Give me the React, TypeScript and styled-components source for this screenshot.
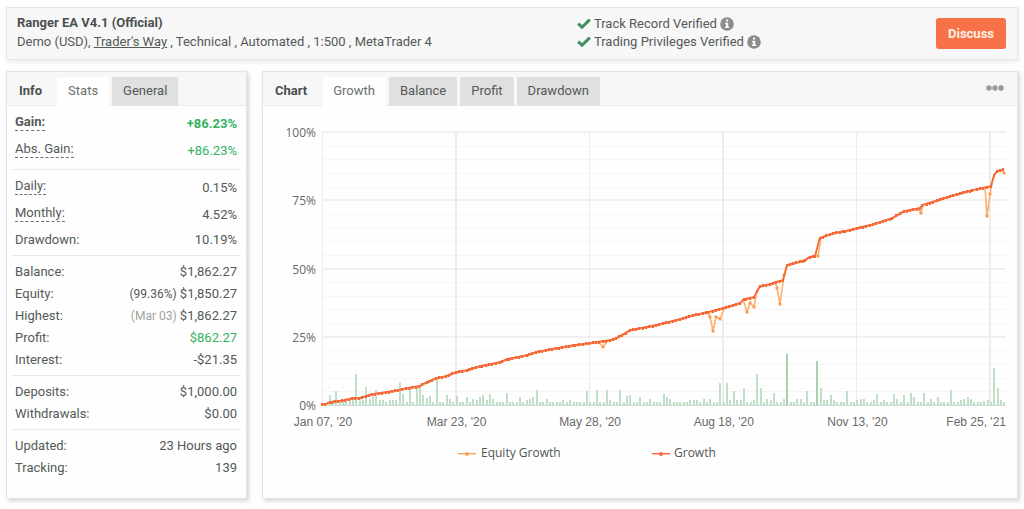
import React from 'react';
import styled, { createGlobalStyle } from 'styled-components';

const GlobalStyle = createGlobalStyle`
  * { box-sizing: border-box; }
  body {
    margin: 0;
    background: #fefefe;
    color: #545a57;
    font-family: Roboto, 'Liberation Sans', sans-serif;
    font-size: 13px;
    line-height: 18px;
  }
`;

const Page = styled.div`
  display: flex;
  flex-direction: column;
  gap: 11px;
  padding: 7px 6px 10px;
`;

const SystemHeader = styled.header`
  display: flex;
  align-items: flex-start;
  gap: 16px;
  height: 53px;
  padding: 5px 11px 5px 10px;
  background: #f7f7f7;
  border: 1px solid #e6e6e6;
  box-shadow: 1px 2px 4px rgba(0, 0, 0, 0.08);
`;

const Summary = styled.div`
  flex: 0 0 55%;
`;

const SystemName = styled.h1`
  margin: 0;
  color: #4a504d;
  font-size: 13px;
  line-height: 19px;
  font-weight: 700;
`;

const Description = styled.p`
  margin: 0;
  line-height: 20px;
`;

const BrokerLink = styled.a`
  color: inherit;
  text-decoration: underline;
`;

const Verifications = styled.ul`
  flex: 1;
  margin: 2px 0 0;
  padding: 0;
  list-style: none;
`;

const Verification = styled.li`
  display: flex;
  align-items: center;
  gap: 3px;
  height: 18px;
`;

const DiscussButton = styled.button`
  height: 31px;
  margin-top: 5px;
  padding: 0 12px;
  border: 0;
  border-radius: 3px;
  background: #f77248;
  color: #fff1e6;
  font: 700 13px Roboto, sans-serif;
  cursor: pointer;
`;

const Columns = styled.main`
  display: flex;
  align-items: stretch;
  gap: 15px;
`;

const Panel = styled.section<{ $width?: string }>`
  display: flex;
  flex-direction: column;
  flex: ${p => (p.$width ? `0 0 ${p.$width}` : '1 1 0')};
  min-width: 0;
  background: #fefefe;
  border: 1px solid #e4e4e4;
  box-shadow: 2px 2px 4px rgba(0, 0, 0, 0.16);
`;

const PanelHeader = styled.div`
  display: flex;
  align-items: flex-end;
  height: 34px;
  padding: 0 13px 0 0;
  background: #f7f7f7;
  box-shadow: inset 0 -1px #ececec;
`;

const PanelTitle = styled.h2`
  margin: 0;
  padding: 0 15px 2px 12px;
  color: #4a504d;
  font-size: 13px;
  line-height: 27px;
  font-weight: 700;
`;

const TabList = styled.div`
  display: flex;
  gap: 3px;
  flex: 1;
`;

const Tab = styled.button<{ $active?: boolean }>`
  height: 29px;
  padding: 0 11px 2px;
  border: 0;
  background: ${p => (p.$active ? '#fefefe' : '#e0e0e0')};
  color: ${p => (p.$active ? '#6b706d' : '#545a57')};
  font: 13px Roboto, sans-serif;
  cursor: pointer;
`;

const MenuButton = styled.button`
  display: flex;
  align-self: center;
  padding: 0 0 3px;
  border: 0;
  background: none;
  color: #9a9a9a;
  cursor: pointer;
`;

const StatsBody = styled.div`
  padding: 0 5px;
`;

const StatGroup = styled.dl`
  margin: 0;
  padding: 5px 4px 4px 3px;
  border-bottom: 1px solid #e9e9e9;
  &:last-child { border-bottom: 0; }
`;

const StatRow = styled.div<{ $help?: boolean; $bold?: boolean }>`
  display: flex;
  justify-content: space-between;
  align-items: flex-start;
  height: ${p => (p.$help ? 27 : 22)}px;
  line-height: ${p => (p.$help ? 26 : 22)}px;
  font-weight: ${p => (p.$bold ? 700 : 400)};
`;

const StatLabel = styled.dt<{ $help?: boolean }>`
  ${p => p.$help && `
    margin-top: 3px;
    line-height: 16px;
    border-bottom: 1px dashed #6d726f;
  `}
`;

const StatValue = styled.dd<{ $positive?: boolean }>`
  margin: 0;
  color: ${p => (p.$positive ? '#35b25e' : 'inherit')};
`;

const Note = styled.span<{ $muted?: boolean }>`
  font-size: 12px;
  color: ${p => (p.$muted ? '#a0a3a1' : 'inherit')};
`;

const ChartSvg = styled.svg`
  display: block;
  width: 100%;
  height: auto;
`;

const AxisText = styled.text`
  fill: #666b69;
  font: 12px 'Liberation Sans', Arial, sans-serif;
`;

const PercentText = styled.text`
  fill: #666b69;
  font: 12px 'Open Sans', sans-serif;
`;

const LegendText = styled.text`
  fill: #505653;
  font: 12px 'Open Sans', sans-serif;
`;

type Stat = {
  label: string;
  value: string;
  help?: boolean;
  bold?: boolean;
  positive?: boolean;
  note?: string;
  mutedNote?: boolean;
};

const statGroups: Stat[][] = [
  [
    { label: 'Gain:', value: '+86.23%', help: true, bold: true, positive: true },
    { label: 'Abs. Gain:', value: '+86.23%', help: true, positive: true },
  ],
  [
    { label: 'Daily:', value: '0.15%', help: true },
    { label: 'Monthly:', value: '4.52%', help: true },
    { label: 'Drawdown:', value: '10.19%' },
  ],
  [
    { label: 'Balance:', value: '$1,862.27' },
    { label: 'Equity:', value: '$1,850.27', note: '(99.36%)' },
    { label: 'Highest:', value: '$1,862.27', note: '(Mar 03)', mutedNote: true },
    { label: 'Profit:', value: '$862.27', positive: true },
    { label: 'Interest:', value: '-$21.35' },
  ],
  [
    { label: 'Deposits:', value: '$1,000.00' },
    { label: 'Withdrawals:', value: '$0.00' },
  ],
  [
    { label: 'Updated:', value: '23 Hours ago' },
    { label: 'Tracking:', value: '139' },
  ],
];

/* Chart units: the plot area is 684 x 273 with its origin at the top left. */
const PLOT_W = 684;
const PLOT_H = 273;
const STEP = 133.6 / 40;

const volumes = [
  2, 2, 10, 5, 14, 3, 5, 7, 6, 7, 31, 4, 5, 18, 6, 9, 15, 5, 5, 3,
  5, 5, 5, 23, 11, 3, 16, 3, 18, 19, 10, 7, 9, 3, 26, 3, 3, 10, 6, 3,
  9, 3, 3, 8, 3, 6, 5, 8, 10, 5, 11, 6, 3, 3, 3, 12, 3, 3, 3, 8,
  3, 5, 6, 8, 15, 3, 3, 6, 3, 3, 3, 3, 5, 3, 5, 3, 3, 3, 3, 14,
  3, 3, 15, 3, 3, 15, 5, 3, 3, 15, 3, 9, 10, 3, 3, 8, 3, 3, 6, 3,
  3, 3, 11, 8, 6, 3, 3, 3, 3, 3, 5, 5, 5, 3, 6, 3, 6, 3, 3, 22,
  3, 22, 5, 14, 5, 5, 17, 3, 3, 5, 31, 17, 3, 6, 5, 12, 3, 3, 6, 51,
  3, 3, 6, 6, 3, 14, 3, 3, 44, 17, 5, 5, 10, 5, 3, 3, 3, 14, 3, 3,
  5, 6, 6, 3, 3, 5, 11, 3, 5, 3, 3, 11, 6, 3, 10, 3, 12, 8, 3, 3,
  12, 3, 6, 3, 8, 3, 3, 3, 15, 3, 3, 5, 6, 8, 6, 3, 3, 3, 4, 5,
  3, 37, 17, 5, 3,
];

const growthAnchors: number[][] = [
  [0, 272], [3, 272], [8, 270], [16, 269], [23, 268], [30, 266], [37, 266], [44, 264],
  [50, 262], [64, 260], [76, 258], [85, 256], [97, 254], [105, 250], [114, 246], [124, 244],
  [134, 240], [145, 238], [158, 234], [178, 230], [185, 227], [205, 223], [214, 220],
  [234, 216], [253, 213], [274, 210], [288, 208], [294, 206], [300, 203], [308, 198],
  [334, 193], [358, 187], [371, 183], [386, 180], [401, 176], [418, 171], [422, 167],
  [432, 165], [435, 159], [438, 154], [448, 152], [456, 149], [461, 148], [465, 133],
  [483, 128], [486, 125], [493, 124], [495, 107], [511, 101], [523, 99], [535, 96],
  [548, 93], [570, 86], [582, 79], [598, 76], [600, 73], [613, 69], [628, 64], [650, 58],
  [669, 54], [672, 43], [675, 39], [683, 37],
];

const equityDips: number[][][] = [
  [[277, 210], [281, 215], [285, 209]],
  [[386, 180], [388, 185], [391, 199], [394, 185], [398, 187], [402, 177]],
  [[421, 167], [425, 180], [428, 171], [432, 175], [435, 159]],
  [[453, 149], [455, 156], [458, 172], [462, 143], [465, 133]],
  [[492, 124], [496, 124], [499, 106]],
  [[596, 76], [599, 81], [601, 74]],
  [[663, 55], [665, 84], [668, 62], [671, 46]],
  [[681, 38], [682, 41]],
];

const growthAt = (x: number) => {
  const next = growthAnchors.findIndex(a => a[0] >= x);
  if (next <= 0) return growthAnchors[next === 0 ? 0 : growthAnchors.length - 1][1];
  const [x0, y0] = growthAnchors[next - 1];
  const [x1, y1] = growthAnchors[next];
  return y0 + ((x - x0) / (x1 - x0)) * (y1 - y0);
};

/* Markers close to an anchor move onto it, which keeps the jumps steep. */
const growth = volumes.map((_, i) => {
  const x = i * STEP;
  const anchor = growthAnchors.find(a => Math.abs(a[0] - x) < 1.5);
  return anchor ?? [x, growthAt(x)];
});
const toPoints = (pts: number[][], dy = 0) => pts.map(([x, y]) => `${x},${y + dy}`).join(' ');

const percentTicks = ['100%', '75%', '50%', '25%', '0%'];
const dateTicks = ["Jan 07, '20", "Mar 23, '20", "May 28, '20", "Aug 18, '20", "Nov 13, '20", "Feb 25, '21"];
const legend = [
  { label: 'Equity Growth', x: 136, textX: 159, color: '#fda35a' },
  { label: 'Growth', x: 330, textX: 352, color: '#f4673a' },
];

const GrowthChart = () => (
  <ChartSvg viewBox="-59 -26 754 392" role="img" aria-label="Growth chart">
    {Array.from({ length: 21 }, (_, i) => (
      <rect key={i} x={0} y={Math.round((i * PLOT_H) / 20) - (i % 5 ? 0 : 1)} width={PLOT_W}
        height={i % 5 ? 1 : 2} fill={i % 5 ? '#f5f5f5' : '#f0f0f0'} />
    ))}
    {dateTicks.map((label, i) => (
      <g key={label}>
        <rect x={Math.round(i * 133.6) - (i % 2)} y={0} width={i % 2 ? 2 : 1} height={PLOT_H} fill="#ececec" />
        <AxisText x={i === 5 ? PLOT_W : i * 133.6 + 1} y={294} textAnchor={i === 5 ? 'end' : 'middle'}>{label}</AxisText>
      </g>
    ))}
    {percentTicks.map((label, i) => (
      <PercentText key={label} x={-6} y={i * (PLOT_H / 4) + 5} textAnchor="end">{label}</PercentText>
    ))}
    <rect x={0} y={PLOT_H} width={PLOT_W} height={1} fill="#c9dfd4" />
    {volumes.map((h, i) => (
      <rect key={i} x={Math.round(i * STEP)} y={PLOT_H - h} width={2} height={h}
        fill={h > 40 ? '#a3d3ae' : '#bfe0c6'} />
    ))}
    <g fill="none" stroke="#fdb06c" strokeWidth={1.6} strokeLinejoin="round">
      <polyline points={toPoints(growth, 1)} />
      {equityDips.map((dip, i) => <polyline key={i} points={toPoints(dip)} />)}
    </g>
    {equityDips.map((dip, i) => (
      <g key={i} fill="#fb9e58">
        {dip.slice(1, -1).map(([x, y]) => <circle key={x} cx={x} cy={y} r={1.7} />)}
      </g>
    ))}
    <circle cx={682} cy={41} r={1.6} fill="#fb9e58" />
    <polyline points={toPoints(growth)} fill="none" stroke="#f4673a" strokeWidth={1.6} strokeLinejoin="round" />
    {growth.map(([x, y]) => (
      <rect key={x} x={Math.round(x) - 1} y={Math.round(y) - 1} width={2} height={3} fill="#f4673a" />
    ))}
    {legend.map(item => (
      <g key={item.label}>
        <rect x={item.x} y={321} width={18} height={1.4} fill={item.color} />
        <circle cx={item.x + 9} cy={322} r={2} fill={item.color} />
        <LegendText x={item.textX} y={325}>{item.label}</LegendText>
      </g>
    ))}
  </ChartSvg>
);

const CheckIcon = () => (
  <svg width="14" height="12" viewBox="0 0 14 12" aria-hidden="true">
    <path d="M1.2 5.600 L5 9.200 L12.8 1.6" fill="none" stroke="#3f8f5c" strokeWidth="3" />
  </svg>
);

const InfoIcon = () => (
  <svg width="14" height="14" viewBox="0 0 14 14" aria-hidden="true">
    <circle cx="7" cy="7" r="6.8" fill="#8c8c8c" />
    <path d="M6 2.6h2.2v2H6zM5 5.8h3.2v3.8h1V11H5V9.600h1V7.200H5z" fill="#f7f7f7" />
  </svg>
);

const DotsIcon = () => (
  <svg width="18" height="6" viewBox="0 0 18 6" aria-hidden="true" fill="currentColor">
    <circle cx="3" cy="3" r="2.700" />
    <circle cx="9" cy="3" r="2.700" />
    <circle cx="15" cy="3" r="2.700" />
  </svg>
);

const Tabs = ({ names }: { names: string[] }) => (
  <TabList role="tablist">
    {names.map((name, i) => (
      <Tab key={name} type="button" role="tab" aria-selected={i === 0} $active={i === 0}>{name}</Tab>
    ))}
  </TabList>
);

export default function App() {
  return (
    <>
      <GlobalStyle />
      <Page>
        <SystemHeader>
          <Summary>
            <SystemName>Ranger EA V4.1 (Official)</SystemName>
            <Description>
              Demo (USD), <BrokerLink href="#broker">Trader's Way</BrokerLink> , Technical , Automated , 1:500 , MetaTrader 4
            </Description>
          </Summary>
          <Verifications>
            {['Track Record Verified', 'Trading Privileges Verified'].map(text => (
              <Verification key={text}><CheckIcon />{text}<InfoIcon /></Verification>
            ))}
          </Verifications>
          <DiscussButton type="button">Discuss</DiscussButton>
        </SystemHeader>
        <Columns>
          <Panel $width="241px">
            <PanelHeader>
              <PanelTitle>Info</PanelTitle>
              <Tabs names={['Stats', 'General']} />
            </PanelHeader>
            <StatsBody>
              {statGroups.map(group => (
                <StatGroup key={group[0].label}>
                  {group.map(s => (
                    <StatRow key={s.label} $help={s.help} $bold={s.bold}>
                      <StatLabel $help={s.help}>{s.label}</StatLabel>
                      <StatValue $positive={s.positive}>
                        {s.note && <><Note $muted={s.mutedNote}>{s.note}</Note>{' '}</>}
                        {s.value}
                      </StatValue>
                    </StatRow>
                  ))}
                </StatGroup>
              ))}
            </StatsBody>
          </Panel>
          <Panel>
            <PanelHeader>
              <PanelTitle>Chart</PanelTitle>
              <Tabs names={['Growth', 'Balance', 'Profit', 'Drawdown']} />
              <MenuButton type="button" aria-label="Chart options"><DotsIcon /></MenuButton>
            </PanelHeader>
            <GrowthChart />
          </Panel>
        </Columns>
      </Page>
    </>
  );
}
